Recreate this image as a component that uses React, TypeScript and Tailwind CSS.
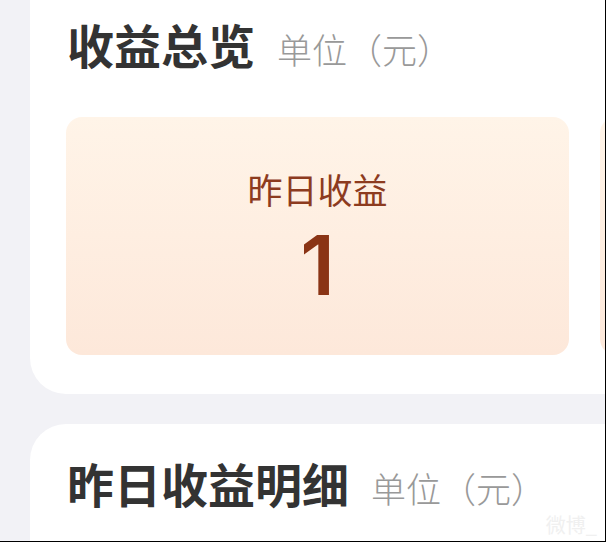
export default function App() {
  const font = { fontFamily: '"Noto Sans CJK SC", "Noto Sans", sans-serif' };
  return (
    <div
      className="relative h-[542px] w-[606px] overflow-hidden border-r border-b border-black bg-[#f2f2f6]"
      style={font}
    >
      <div className="flex flex-col gap-[30px]">
        {/* 收益总览 */}
        <div className="-mt-[46px] ml-[30px] w-[620px] rounded-[36px] bg-white pt-[62px] pb-[39px]">
          <div className="flex items-baseline pl-[37px]">
            <span className="text-[47px] leading-[56px] font-semibold text-[#333333]">收益总览</span>
            <span className="ml-[22px] text-[35px] leading-[56px] font-light text-[#999999]">单位（元）</span>
          </div>
          <div className="mt-[40px] flex gap-[31px] pl-[36px]">
            <div className="flex h-[238px] w-[503px] shrink-0 flex-col items-center rounded-[16px] bg-gradient-to-b from-[#fff4e8] to-[#fde8da] pt-[52px]">
              <div className="text-[35px] leading-[40px] text-[#8d3b1f]">昨日收益</div>
              <div className="mt-[25px] font-['Inter',sans-serif] text-[82px] leading-[64px] font-semibold text-[#8a3415]">1</div>
            </div>
            <div className="h-[238px] w-[503px] shrink-0 rounded-[16px] bg-gradient-to-b from-[#fff4e8] to-[#fde8da]" />
          </div>
        </div>

        {/* 昨日收益明细 */}
        <div className="ml-[30px] h-[200px] w-[620px] rounded-[36px] bg-white pt-[31px]">
          <div className="flex items-baseline pl-[37px]">
            <span className="text-[47px] leading-[56px] font-semibold text-[#333333]">昨日收益明细</span>
            <span className="ml-[22px] text-[35px] leading-[56px] font-light text-[#999999]">单位（元）</span>
          </div>
        </div>
      </div>
      <div className="absolute right-[8px] bottom-[4px] text-[20px] leading-[24px] text-[#f0f0f0]">微博_</div>
    </div>
  );
}
